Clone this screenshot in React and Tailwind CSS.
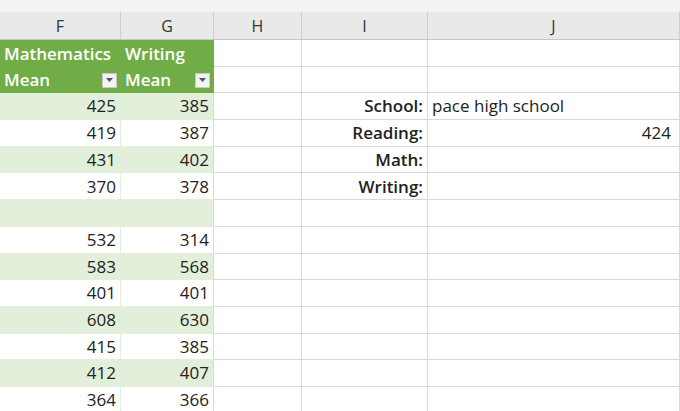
export default function App() {
  const cols = [
    { l: "F", w: "w-[121px]" },
    { l: "G", w: "w-[93px]" },
    { l: "H", w: "w-[88px]" },
    { l: "I", w: "w-[126px]" },
    { l: "J", w: "flex-1" },
  ];
  const data = [
    ["425", "385", "School:", "pace high school", ""],
    ["419", "387", "Reading:", "", "424"],
    ["431", "402", "Math:", "", ""],
    ["370", "378", "Writing:", "", ""],
    ["", "", "", "", ""],
    ["532", "314"], ["583", "568"], ["401", "401"], ["608", "630"],
    ["415", "385"], ["412", "407"], ["364", "366"],
  ];
  const cell = "h-[26.7px] border-r border-b border-[#d9d9d9] flex items-center px-1 shrink-0";
  const Filter = () => (
    <span className="ml-auto w-[15px] h-[15px] bg-[#f3f3f3] border border-[#c8c8c8] flex items-center justify-center">
      <svg width="7" height="4" viewBox="0 0 7 4"><path d="M0 0h7L3.5 4z" fill="#555" /></svg>
    </span>
  );
  return (
    <div className="w-[680px] h-[411px] overflow-hidden bg-white text-[17px] text-[#222]" style={{ fontFamily: '"Open Sans", "Liberation Sans", sans-serif' }}>
      <div className="flex h-[40px] bg-[#e9e9e9] border-b border-[#c6c6c6] border-t-[12px] border-t-[#f3f3f3]">
        {cols.map((c) => (
          <div key={c.l} className={`${c.w} border-r border-[#cfcfcf] flex items-center justify-center text-[16px] text-[#333]`}>{c.l}</div>
        ))}
      </div>
      <div className="flex">
        <div className="w-[121px] flex flex-col">
          <div className={`${cell} bg-[#70ad47] border-b-0 border-r-0 text-white font-semibold`}>Mathematics</div>
          <div className={`${cell} bg-[#70ad47] border-b-0 border-r-0 text-white font-semibold`}>Mean<Filter /></div>
          {data.map((r, i) => (
            <div key={i} className={`${cell} justify-end ${i % 2 === 0 ? "bg-[#e2efda] border-[#e2efda]" : "bg-white border-[#e2efda]"} border-r-[#e2efda]`}>{r[0]}</div>
          ))}
        </div>
        <div className="w-[93px] flex flex-col">
          <div className={`${cell} bg-[#70ad47] border-b-0 border-r-0 text-white font-semibold`}>Writing</div>
          <div className={`${cell} bg-[#70ad47] border-b-0 border-r-0 text-white font-semibold`}>Mean<Filter /></div>
          {data.map((r, i) => (
            <div key={i} className={`${cell} justify-end ${i % 2 === 0 ? "bg-[#e2efda]" : "bg-white"} border-[#e2efda] border-r-[#d9d9d9]`}>{r[1]}</div>
          ))}
        </div>
        <div className="w-[88px] flex flex-col">
          {Array.from({ length: 14 }).map((_, i) => <div key={i} className={cell}></div>)}
        </div>
        <div className="w-[126px] flex flex-col">
          <div className={cell}></div><div className={cell}></div>
          {data.map((r, i) => <div key={i} className={`${cell} justify-end font-semibold`}>{r[2] || ""}</div>)}
        </div>
        <div className="flex-1 flex flex-col">
          <div className={cell}></div><div className={cell}></div>
          {data.map((r, i) => (
            <div key={i} className={`${cell} ${r[4] ? "justify-end pr-2" : ""}`}>{r[3] || r[4] || ""}</div>
          ))}
        </div>
      </div>
    </div>
  );
}
